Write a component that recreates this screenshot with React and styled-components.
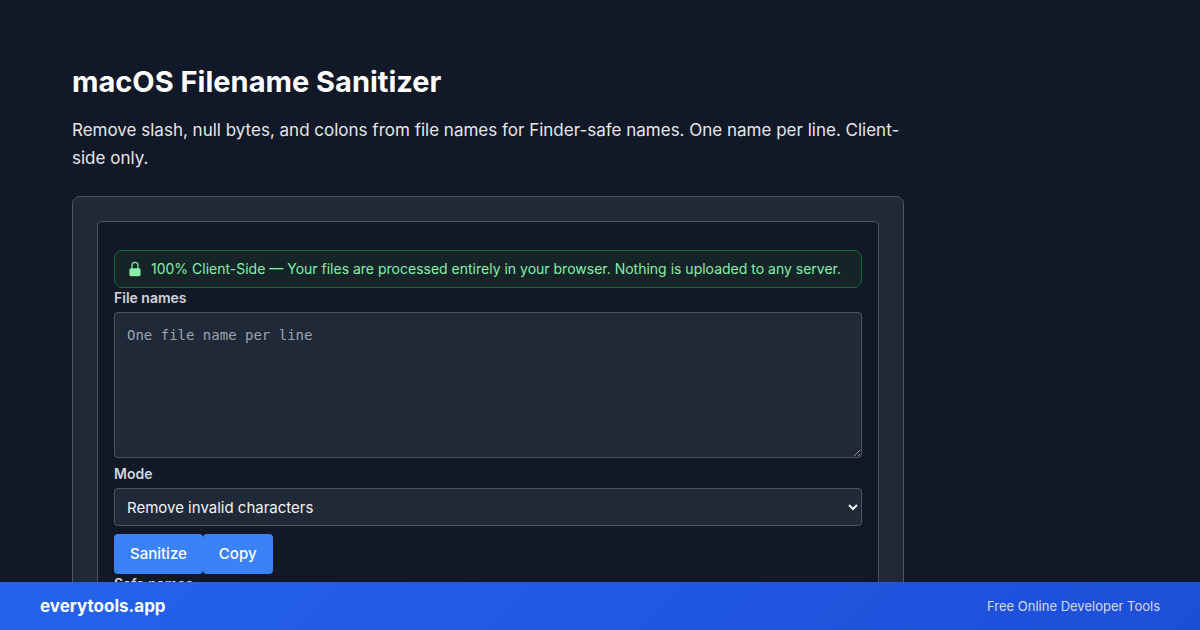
import React, { useState } from 'react';
import styled, { createGlobalStyle, ThemeProvider } from 'styled-components';

const theme = {
  background: '#111827',
  surface: '#1f2937',
  border: '#4b5563',
  text: '#f3f4f6',
  textSecondary: '#e5e7eb',
  label: '#d1d5db',
  placeholder: '#9ca3af',
  accent: '#3b82f6',
  success: '#86efac',
  successBorder: '#166534',
  successSurface: '#142427',
};

const GlobalStyle = createGlobalStyle`
  *, *::before, *::after {
    box-sizing: border-box;
  }

  body {
    margin: 0;
    background: ${props => props.theme.background};
    color: ${props => props.theme.text};
    font-family: Inter, Roboto, "Liberation Sans", sans-serif;
    font-size: 16px;
    line-height: 24px;
    -webkit-font-smoothing: antialiased;
  }
`;

const Page = styled.div`
  height: 100vh;
  overflow: hidden;
  display: flex;
  flex-direction: column;
`;

const Main = styled.main`
  flex: 1;
  min-height: 0;
  overflow: hidden;
  padding: 64px 72px 0;
`;

const Content = styled.div`
  max-width: 832px;
`;

const Title = styled.h1`
  margin: 0 0 16px;
  font-size: 29px;
  line-height: 36px;
  font-weight: 700;
  color: #ffffff;
`;

const Description = styled.p`
  margin: 0 0 24px;
  font-size: 17px;
  line-height: 28px;
  color: ${props => props.theme.textSecondary};
`;

const Card = styled.section`
  padding: 24px;
  background: ${props => props.theme.surface};
  border: 1px solid ${props => props.theme.border};
  border-radius: 8px;
`;

const Panel = styled.div`
  display: flex;
  flex-direction: column;
  padding: 28px 16px;
  background: ${props => props.theme.background};
  border: 1px solid ${props => props.theme.border};
  border-radius: 4px;
`;

const Notice = styled.div`
  display: flex;
  align-items: center;
  gap: 8px;
  padding: 8px 12px;
  background: ${props => props.theme.successSurface};
  border: 1px solid ${props => props.theme.successBorder};
  border-radius: 8px;
  font-size: 14px;
  line-height: 20px;
  color: ${props => props.theme.success};
`;

const LockIcon = styled.svg`
  width: 16px;
  height: 16px;
  flex-shrink: 0;
`;

const Label = styled.label`
  margin-bottom: 4px;
  font-size: 14px;
  line-height: 20px;
  font-weight: 600;
  color: ${props => props.theme.label};
`;

const TextArea = styled.textarea`
  display: block;
  width: 100%;
  height: 146px;
  margin: 0 0 6px;
  padding: 12px;
  background: ${props => props.theme.surface};
  border: 1px solid ${props => props.theme.border};
  border-radius: 4px;
  color: ${props => props.theme.text};
  font-family: "DejaVu Sans Mono", "Liberation Mono", monospace;
  font-size: 14px;
  line-height: 20px;
  resize: vertical;

  &::placeholder {
    color: ${props => props.theme.placeholder};
  }
`;

const Select = styled.select`
  width: 100%;
  height: 38px;
  margin: 0 0 8px;
  padding: 0 0 0 8px;
  background: ${props => props.theme.surface};
  border: 1px solid ${props => props.theme.border};
  border-radius: 4px;
  color: ${props => props.theme.text};
  font-family: inherit;
  font-size: 15px;
`;

const Actions = styled.div`
  display: flex;
`;

const Button = styled.button`
  padding: 8px 16px;
  background: ${props => props.theme.accent};
  border: 0;
  border-radius: 4px;
  color: #ffffff;
  font-family: inherit;
  font-size: 15px;
  font-weight: 500;
  line-height: 24px;
  cursor: pointer;
`;

const Footer = styled.footer`
  flex-shrink: 0;
  height: 48px;
  padding: 0 40px;
  display: flex;
  align-items: center;
  justify-content: space-between;
  background: linear-gradient(135deg, #2563eb 0%, #1d4ed8 100%);
`;

const Brand = styled.span`
  font-size: 17px;
  font-weight: 700;
  color: #ffffff;
`;

const Tagline = styled.span`
  font-size: 13px;
  color: rgba(255, 255, 255, 0.8);
`;

const sanitize = (name, mode) => name.replace(/[/:\0]/g, mode === 'replace' ? '_' : '');

const App = () => {
  const [names, setNames] = useState('');
  const [mode, setMode] = useState('remove');
  const [result, setResult] = useState('');

  const handleSanitize = () => {
    setResult(names.split('\n').map((name) => sanitize(name, mode)).join('\n'));
  };

  const handleCopy = () => {
    navigator.clipboard?.writeText(result);
  };

  return (
    <ThemeProvider theme={theme}>
      <GlobalStyle />
      <Page>
        <Main>
          <Content>
            <Title>macOS Filename Sanitizer</Title>
            <Description>
              Remove slash, null bytes, and colons from file names for Finder-safe names. One name per line. Client-side only.
            </Description>
            <Card>
              <Panel>
                <Notice>
                  <LockIcon viewBox="0 0 20 20" fill="currentColor" aria-hidden="true">
                    <path
                      fillRule="evenodd"
                      clipRule="evenodd"
                      d="M10 1a4.5 4.5 0 0 0-4.5 4.5V9H5a2 2 0 0 0-2 2v6a2 2 0 0 0 2 2h10a2 2 0 0 0 2-2v-6a2 2 0 0 0-2-2h-.5V5.5A4.5 4.5 0 0 0 10 1Zm3 8V5.5a3 3 0 1 0-6 0V9h6Z"
                    />
                  </LockIcon>
                  <span>
                    100% Client-Side — Your files are processed entirely in your browser. Nothing is uploaded to any server.
                  </span>
                </Notice>

                <Label htmlFor="names">File names</Label>
                <TextArea
                  id="names"
                  placeholder="One file name per line"
                  value={names}
                  onChange={(e) => setNames(e.target.value)}
                />

                <Label htmlFor="mode">Mode</Label>
                <Select id="mode" value={mode} onChange={(e) => setMode(e.target.value)}>
                  <option value="remove">Remove invalid characters</option>
                  <option value="replace">Replace with underscore</option>
                </Select>

                <Actions>
                  <Button type="button" onClick={handleSanitize}>Sanitize</Button>
                  <Button type="button" onClick={handleCopy}>Copy</Button>
                </Actions>

                <Label htmlFor="result">Safe names</Label>
                <TextArea id="result" value={result} readOnly />
              </Panel>
            </Card>
          </Content>
        </Main>
        <Footer>
          <Brand>everytools.app</Brand>
          <Tagline>Free Online Developer Tools</Tagline>
        </Footer>
      </Page>
    </ThemeProvider>
  );
};

export default App;
